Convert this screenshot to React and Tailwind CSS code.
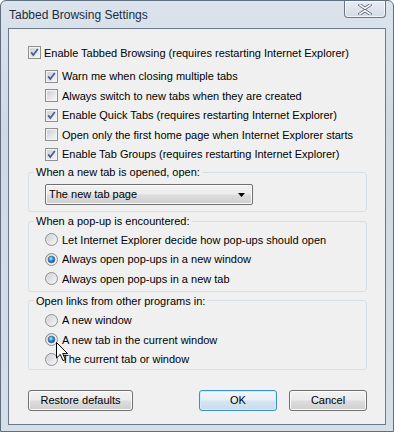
import React from "react";

const FONT = "font-['Liberation_Sans',Arial,sans-serif] text-[11px]";

function Check({ checked }) {
  return (
    <svg width="13" height="13" viewBox="0 0 13 13" className="shrink-0">
      <defs>
        <linearGradient id="cbg" x1="0" y1="0" x2="1" y2="1">
          <stop offset="0" stopColor="#c9cdd3" />
          <stop offset="1" stopColor="#f7f7f7" />
        </linearGradient>
      </defs>
      <rect x="0.5" y="0.5" width="12" height="12" fill="#f4f4f4" stroke="#8e8f8f" />
      <rect x="2" y="2" width="9" height="9" fill="url(#cbg)" stroke="#e9e9e9" strokeWidth="0.5" />
      {checked && (
        <path d="M3.2 6.4 L5.3 9 L9.8 2.9" fill="none" stroke="#4a5f8f" strokeWidth="1.7" />
      )}
    </svg>
  );
}

function Radio({ checked }) {
  return (
    <svg width="13" height="13" viewBox="0 0 13 13" className="shrink-0">
      <defs>
        <linearGradient id="rbg" x1="0" y1="0" x2="1" y2="1">
          <stop offset="0" stopColor="#c7cbd1" />
          <stop offset="1" stopColor="#fafafa" />
        </linearGradient>
        <radialGradient id="rdot" cx="0.4" cy="0.35" r="0.7">
          <stop offset="0" stopColor="#bfe7ff" />
          <stop offset="0.45" stopColor="#3a9ae0" />
          <stop offset="1" stopColor="#0a4c8f" />
        </radialGradient>
      </defs>
      <circle cx="6.5" cy="6.5" r="6" fill="url(#rbg)" stroke="#8e8f8f" />
      <circle cx="6.5" cy="6.5" r="4.6" fill="none" stroke="#ececec" strokeWidth="0.6" />
      {checked && <circle cx="6.5" cy="6.5" r="3.3" fill="url(#rdot)" stroke="#1b4f82" strokeWidth="0.6" />}
    </svg>
  );
}

function CheckRow({ checked, label, main }) {
  return (
    <div className="flex h-[19.5px] items-center">
      <Check checked={checked} />
      <span className={main ? "ml-[3px]" : "ml-[4px]"}>{label}</span>
    </div>
  );
}

function RadioRow({ checked, label }) {
  return (
    <div className="flex h-[19.5px] items-center">
      <Radio checked={checked} />
      <span className="ml-[4px]">{label}</span>
    </div>
  );
}

function Btn({ children, w, primary }) {
  return (
    <div
      className={
        "flex h-[21px] items-center justify-center rounded-[3px] border " +
        w +
        (primary
          ? " border-[#3c8fd3] bg-[linear-gradient(to_bottom,#f1f7fb_0%,#e6f0f7_48%,#d6e6f1_52%,#c8dceb_100%)] shadow-[inset_0_0_0_1px_#cdeefd]"
          : " border-[#707070] bg-[linear-gradient(to_bottom,#f2f2f2_0%,#ebebeb_48%,#dddddd_52%,#cfcfcf_100%)] shadow-[inset_0_0_0_1px_#fbfbfb]")
      }
    >
      {children}
    </div>
  );
}

export default function App() {
  return (
    <div
      className={
        "relative h-[432px] w-[394px] overflow-hidden rounded-t-[6px] border border-[#5f6f80] bg-[linear-gradient(to_bottom,#dbe3ec_0%,#cfd9e4_30%,#d6dee8_100%)] text-black " +
        FONT
      }
    >
      <div className="flex h-[27px] items-start justify-between pl-[8px] pr-[7px]">
        <span className="mt-[6px] text-[12px] leading-[16px] text-[#1b2d42]">Tabbed Browsing Settings</span>
        <div className="flex h-[17px] w-[42px] items-center justify-center rounded-b-[4px] border border-t-0 border-[#6a7888] bg-[linear-gradient(to_bottom,#e7edf3,#d3dce6)] shadow-[inset_0_0_0_1px_rgba(255,255,255,0.7)]">
          <svg width="14" height="11" viewBox="0 0 14 11">
            <path d="M2 1 L7 4.3 L12 1 M2 10 L7 6.7 L12 10" fill="none" stroke="#56616e" strokeWidth="3.2" strokeLinecap="square" />
            <path d="M2 1 L7 4.3 L12 1 M2 10 L7 6.7 L12 10" fill="none" stroke="#ffffff" strokeWidth="1.6" strokeLinecap="square" />
          </svg>
        </div>
      </div>

      <div className="mx-[7px] h-[397px] border border-[#6c7b8c] bg-[#f0f0f0] pl-[19px] pr-[18px] pt-[14px]">
        <CheckRow checked main label="Enable Tabbed Browsing (requires restarting Internet Explorer)" />
        <div className="mt-[4px] pl-[17px]">
          <CheckRow checked label="Warn me when closing multiple tabs" />
          <CheckRow label="Always switch to new tabs when they are created" />
          <CheckRow checked label="Enable Quick Tabs (requires restarting Internet Explorer)" />
          <CheckRow label="Open only the first home page when Internet Explorer starts" />
          <CheckRow checked label="Enable Tab Groups (requires restarting Internet Explorer)" />
        </div>

        <fieldset className="rounded-[3px] border border-[#d5dfe5] pb-[6px]">
          <legend className="ml-[5px] px-[2px] leading-[16px]">When a new tab is opened, open:</legend>
          <div className="mt-[4px] pl-[16px]">
            <div className="relative flex h-[21px] w-[208px] items-center rounded-[2px] border border-[#707070] bg-[linear-gradient(to_bottom,#f2f2f2_0%,#ebebeb_48%,#dddddd_52%,#cfcfcf_100%)] pl-[3px] shadow-[inset_0_0_0_1px_#fbfbfb]">
              <span>The new tab page</span>
              <svg className="ml-auto mr-[7px]" width="7" height="4" viewBox="0 0 7 4">
                <path d="M0 0 H7 L3.5 4 Z" fill="#000" />
              </svg>
            </div>
          </div>
        </fieldset>

        <fieldset className="mt-[1px] rounded-[3px] border border-[#d5dfe5] pb-[2px]">
          <legend className="ml-[5px] px-[2px] leading-[16px]">When a pop-up is encountered:</legend>
          <div className="mt-[1px] pl-[16px]">
            <RadioRow label="Let Internet Explorer decide how pop-ups should open" />
            <RadioRow checked label="Always open pop-ups in a new window" />
            <RadioRow label="Always open pop-ups in a new tab" />
          </div>
        </fieldset>

        <fieldset className="mt-[1px] rounded-[3px] border border-[#d5dfe5] pb-[0px]">
          <legend className="ml-[5px] px-[2px] leading-[16px]">Open links from other programs in:</legend>
          <div className="mt-[2px] pl-[16px]">
            <RadioRow label="A new window" />
            <RadioRow checked label="A new tab in the current window" />
            <RadioRow label="The current tab or window" />
          </div>
        </fieldset>

        <div className="mt-[20px] flex items-center">
          <Btn w="w-[105px]">Restore defaults</Btn>
          <div className="ml-auto flex gap-[12px]">
            <Btn w="w-[78px]" primary>OK</Btn>
            <Btn w="w-[78px]">Cancel</Btn>
          </div>
        </div>
      </div>

      <svg className="absolute left-[55px] top-[341px]" width="13" height="20" viewBox="0 0 13 20">
        <path d="M0.5 0.5 V16 L4.3 12.4 L7 18.6 L9.3 17.6 L6.7 11.6 H11.6 Z" fill="#fff" stroke="#000" strokeWidth="1" strokeLinejoin="round" />
      </svg>
    </div>
  );
}
